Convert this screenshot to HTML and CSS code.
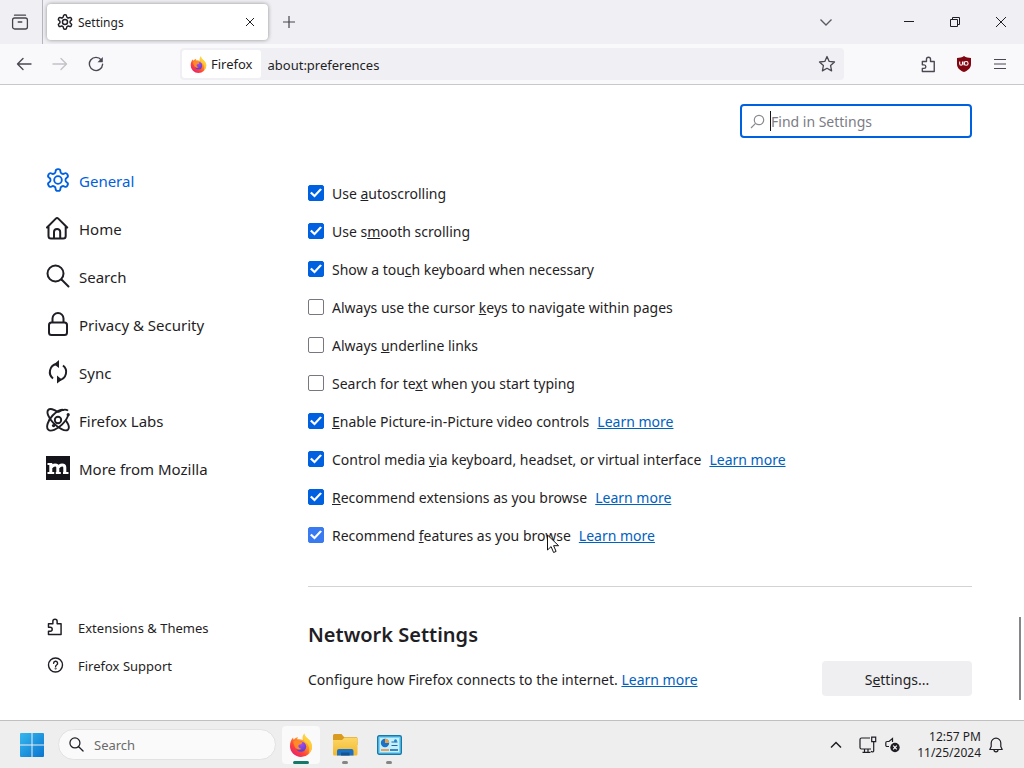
FILE: index.html
```html
<!DOCTYPE html>
<html lang="en">
<head>
<meta charset="utf-8">
<meta name="viewport" content="width=device-width, initial-scale=1">
<title>Settings</title>
<link rel="stylesheet" href="styles.css">
</head>
<body>
<svg class="sprite" aria-hidden="true">
  <defs>
    <linearGradient id="fx-flame" x1="0.85" y1="0.1" x2="0.2" y2="0.95">
      <stop offset="0" stop-color="#ffe14a"/><stop offset="0.35" stop-color="#ff9a26"/><stop offset="0.7" stop-color="#ff4438"/><stop offset="1" stop-color="#e8206c"/>
    </linearGradient>
    <radialGradient id="fx-globe" cx="0.5" cy="0.25" r="0.8">
      <stop offset="0" stop-color="#a44df0"/><stop offset="1" stop-color="#5a3bc8"/>
    </radialGradient>
    <linearGradient id="win-blue" x1="0" y1="0" x2="1" y2="1">
      <stop offset="0" stop-color="#35b8ee"/><stop offset="1" stop-color="#0b74cf"/>
    </linearGradient>
    <linearGradient id="folder-yellow" x1="0" y1="0" x2="0" y2="1">
      <stop offset="0" stop-color="#fcd766"/><stop offset="1" stop-color="#f2b72c"/>
    </linearGradient>
  </defs>
  <symbol id="gear" viewBox="1 1 22 22">
    <path fill="none" stroke="currentColor" d="M12.22 2h-.44a2 2 0 0 0-2 2v.18a2 2 0 0 1-1 1.73l-.43.25a2 2 0 0 1-2 0l-.15-.08a2 2 0 0 0-2.73.73l-.22.38a2 2 0 0 0 .73 2.73l.15.1a2 2 0 0 1 1 1.72v.51a2 2 0 0 1-1 1.74l-.15.09a2 2 0 0 0-.73 2.73l.22.38a2 2 0 0 0 2.73.73l.15-.08a2 2 0 0 1 2 0l.43.25a2 2 0 0 1 1 1.73V20a2 2 0 0 0 2 2h.44a2 2 0 0 0 2-2v-.18a2 2 0 0 1 1-1.73l.43-.25a2 2 0 0 1 2 0l.15.08a2 2 0 0 0 2.73-.73l.22-.39a2 2 0 0 0-.73-2.73l-.15-.08a2 2 0 0 1-1-1.74v-.5a2 2 0 0 1 1-1.74l.15-.09a2 2 0 0 0 .73-2.73l-.22-.38a2 2 0 0 0-2.73-.73l-.15.08a2 2 0 0 1-2 0l-.43-.25a2 2 0 0 1-1-1.73V4a2 2 0 0 0-2-2z"/>
    <circle cx="12" cy="12" r="3.5" fill="none" stroke="currentColor"/>
  </symbol>
  <symbol id="puzzle" viewBox="0 0 16 16">
    <path fill="none" stroke="currentColor" stroke-width="1.3" stroke-linejoin="round" d="M2.2 14.6h11.2V5.2H9.9V3.1a1.9 1.9 0 0 0-3.8 0v2.1H2.2v3.1h1.6a1.7 1.7 0 0 1 0 3.4H2.2z"/>
  </symbol>
  <symbol id="firefox" viewBox="0 0 24 24">
    <path fill="url(#fx-flame)" d="M15.4.4c.2 2.300 1.500 3.500 3 4.800 2.800 2.300 4.600 5 4.600 8.200A11 10.600 0 0 1 1 13.300c0-3.600 1-6.600 3.100-8.700 0 1 .2 1.700.7 2.200C6 5.200 7.200 4.400 9 3.900c-.6.9-.8 1.700-.7 2.400 2.400-.3 4.200-.1 5.700.8-.9-2.600-.3-5 1.400-6.700z"/>
    <path fill="#ffd53d" d="M15.400.4c.2 2.300 1.500 3.500 3 4.800 2.800 2.300 4.600 5 4.600 8.200 0 3-1.400 5.700-3.600 7.500 1.500-3.300 1.200-8.600-2.300-11.100C14.600 8.100 12.800 4.600 15.400.4z" opacity=".75"/>
    <circle cx="12" cy="13.600" r="5.200" fill="url(#fx-globe)"/>
    <path fill="#ff8a2a" d="M4.300 8.500c2.500-1.600 4.500-1.200 6 .1 1.200 0 2.300.1 3.100.8-.5 1.600-2.300 1.900-3.700 2.600-.9 1.500.2 3.600 2.700 3.700-2.900 2.100-7.200.6-8.100-7.200z"/>
  </symbol>
  <symbol id="magnifier" viewBox="0 0 24 24">
    <circle cx="9.500" cy="9.500" r="8" fill="none" stroke="currentColor" stroke-width="2"/>
    <path d="M15.500 15.500l7 7" fill="none" stroke="currentColor" stroke-width="2" stroke-linecap="round"/>
  </symbol>
</svg>

<header class="tabbar">
  <button class="view-btn" aria-label="Firefox View">
    <svg width="18" height="18" viewBox="0 0 18 18" fill="none" stroke="currentColor" stroke-width="1.300" stroke-linecap="round"><path d="M3.500 2.200h11"/><rect x="1.600" y="5" width="14.800" height="11" rx="2"/><path d="M7.200 9h3.600"/></svg>
  </button>
  <div class="tab">
    <svg class="tab-icon" width="16" height="16" stroke-width="2"><use href="#gear"/></svg>
    <span class="tab-title">Settings</span>
    <button class="tab-close" aria-label="Close tab"><svg width="10" height="10" viewBox="0 0 10 10"><path d="M1 1l8 8M9 1l-8 8" stroke="currentColor"/></svg></button>
  </div>
  <button class="new-tab" aria-label="New tab"><svg width="14" height="14" viewBox="0 0 14 14"><path d="M7 1v12M1 7h12" stroke="currentColor" stroke-width="1.200"/></svg></button>
  <button class="all-tabs" aria-label="List all tabs"><svg width="14" height="14" viewBox="0 0 14 14"><path d="M1.500 4.500L7 10l5.500-5.500" fill="none" stroke="currentColor" stroke-width="1.400"/></svg></button>
  <div class="window-controls">
    <button aria-label="Minimize"><svg width="12" height="12" viewBox="0 0 12 12"><path d="M1 5.500h10" stroke="currentColor"/></svg></button>
    <button aria-label="Restore"><svg width="12" height="12" viewBox="0 0 12 12" fill="none" stroke="currentColor"><path d="M1.500 3.500h7v7h-7zM3.500 3.500v-2h7v7h-2"/></svg></button>
    <button aria-label="Close"><svg width="12" height="12" viewBox="0 0 12 12"><path d="M1 1l10 10M11 1L1 11" stroke="currentColor"/></svg></button>
  </div>
</header>

<nav class="toolbar" aria-label="Navigation">
  <button aria-label="Back"><svg width="16" height="16" viewBox="0 0 16 16" fill="none" stroke="currentColor" stroke-width="1.400" stroke-linecap="round" stroke-linejoin="round"><path d="M15 8H1.500M7 2.500L1.500 8 7 13.500"/></svg></button>
  <button class="dim" aria-label="Forward" disabled><svg width="16" height="16" viewBox="0 0 16 16" fill="none" stroke="currentColor" stroke-width="1.400" stroke-linecap="round" stroke-linejoin="round"><path d="M1 8h13.500M9 2.500L14.500 8 9 13.500"/></svg></button>
  <button aria-label="Reload"><svg width="16" height="16" viewBox="0 0 16 16"><path d="M13.300 4A6.600 6.600 0 1 0 14.600 8.300" fill="none" stroke="currentColor" stroke-width="1.400" stroke-linecap="round"/><path d="M14.800 1v5.200H9.500z" fill="currentColor"/></svg></button>
  <span class="spring"></span>
  <div class="urlbar">
    <button class="identity"><svg width="17" height="17"><use href="#firefox"/></svg>Firefox</button>
    <input class="url" type="text" value="about:preferences" aria-label="Address">
    <button class="bookmark" aria-label="Bookmark this page"><svg width="18" height="18" viewBox="0 0 18 18"><path d="M9 1.500l2.200 4.900 5.300.6-3.900 3.600 1 5.300L9 13.300l-4.600 2.600 1-5.300L1.500 7l5.300-.6z" fill="none" stroke="currentColor" stroke-width="1.300" stroke-linejoin="round"/></svg></button>
  </div>
  <span class="spring"></span>
  <button aria-label="Extensions"><svg width="17" height="17"><use href="#puzzle"/></svg></button>
  <button aria-label="uBlock Origin"><svg width="16" height="16" viewBox="0 0 16 16"><path d="M8 0c2 1.400 4.300 1.900 7 2v6c0 4-3 6.500-7 8-4-1.500-7-4-7-8V2c2.700-.1 5-.6 7-2z" fill="#800612"/><path d="M3.700 5.500v2.300a1.400 1.400 0 0 0 2.800 0V5.500M8 5.400v3.800" fill="none" stroke="#fff" stroke-width="1.100"/><circle cx="10.200" cy="7.400" r="1.900" fill="none" stroke="#fff" stroke-width="1.100"/></svg></button>
  <button aria-label="Open application menu"><svg width="14" height="14" viewBox="0 0 14 14"><path d="M1 2.500h12M1 7h12M1 11.500h12" stroke="currentColor" stroke-width="1.200"/></svg></button>
</nav>

<div class="page">
  <aside class="sidebar">
    <nav class="categories" aria-label="Settings categories">
      <a class="current" href="#general"><svg width="24" height="24" stroke-width="1.700"><use href="#gear"/></svg>General</a>
      <a href="#home"><svg width="24" height="24" viewBox="0 0 24 24" fill="none" stroke="currentColor" stroke-width="2" stroke-linejoin="round" stroke-linecap="round"><path d="M1 11.500L9.800 2.600a1.800 1.800 0 0 1 2.500 0L21.200 11.500M2.500 10.300v9.700a2.500 2.500 0 0 0 2.500 2.500h12.200a2.500 2.500 0 0 0 2.500-2.500v-9.700"/><path d="M8 22v-6a3.100 3.100 0 0 1 6.200 0v6"/></svg>Home</a>
      <a href="#search"><svg width="24" height="24"><use href="#magnifier"/></svg>Search</a>
      <a href="#privacy"><svg width="24" height="24" viewBox="0 0 24 24" fill="none" stroke="currentColor" stroke-width="2"><rect x="3" y="10.500" width="18" height="12.500" rx="2.500"/><path d="M6.500 10.500V6.500a5.500 5.500 0 0 1 11 0v4"/></svg>Privacy &amp; Security</a>
      <a href="#sync"><svg width="24" height="24" viewBox="0 0 24 24" fill="none" stroke="currentColor" stroke-width="2"><path d="M10.500 4A8.200 8.200 0 0 0 7 18.500M13.500 20A8.200 8.200 0 0 0 17 5.500"/><path d="M8 4.200l5-4.200v8zM16 19.800l-5-4.200v8z" fill="currentColor" stroke="none"/></svg>Sync</a>
      <a href="#labs"><svg width="24" height="24" viewBox="0 0 24 24" fill="none" stroke="currentColor" stroke-width="1.900"><circle cx="12" cy="12" r="3.200"/><path d="M12 4.300C8 1 3.800.2 2.200 2 .2 4.200 2.500 9.800 7.300 14.800 12.500 20.200 19.300 24 21.900 21.700c1.700-1.600.8-5.200-2-9.200"/><path d="M18.300 2.200C15.300.6 10.600 3.300 6.600 7.500 1.700 12.700-.2 19.300 2.200 21.700c2.400 2.300 8.900-.2 14-5.300 3.300-3.300 5.400-6.600 6-9.500"/><path d="M12 4.300c2.400-1.800 4.800-2.700 6.800-2.700 1.200 0 2.400.3 3.200 1"/><circle cx="22.200" cy="6.700" r="1.600" fill="currentColor" stroke="none"/><circle cx="7.600" cy="17.600" r="1.700" fill="currentColor" stroke="none"/></svg>Firefox Labs</a>
      <a href="#mozilla"><svg width="24" height="24" viewBox="0 0 24 24"><path d="M0 0h24v24H0z" fill="#15141a"/><path d="M4.800 7v10M11.800 17v-5.500c0-3.500-5-3.500-6.500 0M18.800 17v-5.500c0-3.500-5-3.500-6.500 0" fill="none" stroke="#fff" stroke-width="3"/><path d="M1.500 8h4M1.500 17h6.700M9.800 17h5M17 17h5.500" stroke="#fff" stroke-width="2"/></svg>More from Mozilla</a>
    </nav>
    <nav class="side-links" aria-label="Help">
      <a href="#addons"><svg width="18" height="18"><use href="#puzzle"/></svg>Extensions &amp; Themes</a>
      <a href="#support"><svg width="18" height="18" viewBox="0 0 18 18" fill="none" stroke="currentColor" stroke-width="1.400"><circle cx="9.500" cy="9" r="7"/><path d="M7.600 7.300a2 2 0 1 1 3 1.700c-.7.400-1 .8-1 1.500" stroke-linecap="round"/><circle cx="9.600" cy="12.600" r=".3"/></svg>Firefox Support</a>
    </nav>
  </aside>

  <main class="content">
    <div class="find">
      <svg width="15" height="15" viewBox="0 0 15 15" fill="none" stroke="currentColor" stroke-width="1.200"><circle cx="9" cy="6" r="4.700"/><path d="M5.600 9.400L1 14"/></svg>
      <span class="caret"></span>
      <input type="search" placeholder="Find in Settings" aria-label="Find in Settings">
    </div>

    <ul class="options">
      <li><label><input type="checkbox" checked><span>Use <u>a</u>utoscrolling</span></label></li>
      <li><label><input type="checkbox" checked><span>Use s<u>m</u>ooth scrolling</span></label></li>
      <li><label><input type="checkbox" checked><span>Show a tou<u>c</u>h keyboard when necessary</span></label></li>
      <li><label><input type="checkbox"><span>Always use the cursor <u>k</u>eys to navigate within pages</span></label></li>
      <li><label><input type="checkbox"><span>Always <u>u</u>nderline links</span></label></li>
      <li><label><input type="checkbox"><span>Search for te<u>x</u>t when you start typing</span></label></li>
      <li><label><input type="checkbox" checked><span><u>E</u>nable Picture-in-Picture video controls</span></label><a href="#pip">Learn more</a></li>
      <li><label><input type="checkbox" checked><span>Control media <u>v</u>ia keyboard, headset, or virtual interface</span></label><a href="#media">Learn more</a></li>
      <li><label><input type="checkbox" checked><span><u>R</u>ecommend extensions as you browse</span></label><a href="#extensions">Learn more</a></li>
      <li><label class="hovered"><input type="checkbox" checked><span>Recommend <u>f</u>eatures as you browse</span><svg class="pointer" width="14" height="20" viewBox="0 0 14 20"><path d="M1.500 1v15l3.600-3.400 2.500 5.900 2.500-1.100-2.500-5.700h5z" fill="#fff" stroke="#111"/></svg></label><a href="#features">Learn more</a></li>
    </ul>

    <section class="network">
      <h2>Network Settings</h2>
      <div class="network-row">
        <p>Configure how Firefox connects to the internet. <a href="#network">Learn more</a></p>
        <button class="settings-btn">S<u>e</u>ttings...</button>
      </div>
    </section>
  </main>
  <span class="scroll-thumb"></span>
</div>

<footer class="taskbar">
  <button class="start" aria-label="Start"><svg width="24" height="24" viewBox="0 0 24 24" fill="url(#win-blue)"><path d="M0 1a1 1 0 0 1 1-1h10.500v11.500H0zM12.500 0H23a1 1 0 0 1 1 1v10.500H12.500zM0 12.500h11.500V24H1a1 1 0 0 1-1-1zM12.500 12.500H24V23a1 1 0 0 1-1 1H12.500z"/></svg></button>
  <div class="task-search"><svg width="15" height="15"><use href="#magnifier"/></svg><input type="text" placeholder="Search" aria-label="Search Windows"></div>
  <div class="apps">
    <button class="app active" aria-label="Firefox"><svg width="24" height="24"><use href="#firefox"/></svg></button>
    <button class="app" aria-label="File Explorer"><svg width="26" height="24" viewBox="0 0 26 24"><path d="M1 2.500A1.500 1.500 0 0 1 2.500 1h7L12 4h12a1.500 1.500 0 0 1 1.500 1.500V12H1z" fill="#d99a20"/><path d="M1 7h9l2.500-2.500H24A1.500 1.500 0 0 1 25.500 6v15a1.500 1.500 0 0 1-1.500 1.500H2.500A1.500 1.500 0 0 1 1 21z" fill="url(#folder-yellow)"/><path d="M5 22.500V18a2 2 0 0 1 2-2h12.500a2 2 0 0 1 2 2v4.500z" fill="#1b72c4"/><path d="M9 19.500h8.500v3H9z" fill="#125397"/></svg></button>
    <button class="app" aria-label="Control Panel"><svg width="25" height="20" viewBox="0 0 25 20"><rect x=".7" y=".7" width="23.600" height="18.600" rx="1.500" fill="#7bd3f3" stroke="#1679ad" stroke-width="1.400"/><rect x="3" y="3" width="19" height="14" fill="#c4effc"/><circle cx="8" cy="8" r="4.200" fill="#1b73c9"/><path d="M8 8V3.800A4.200 4.200 0 0 1 12.200 8z" fill="#f2a03a"/><path d="M14.500 7h6M14.500 10.500h6" stroke="#1c6cab" stroke-width="1.200"/><circle cx="18.500" cy="5.800" r="1.500" fill="#2784c8"/><path d="M4 15h8" stroke="#f28b34" stroke-width="1.600"/><path d="M13 15h8" stroke="#1c6cab" stroke-width="1.600"/></svg></button>
  </div>
  <div class="tray">
    <button aria-label="Show hidden icons"><svg width="12" height="12" viewBox="0 0 12 12"><path d="M1 8.500l5-5 5 5" fill="none" stroke="currentColor" stroke-width="1.500"/></svg></button>
    <button class="status" aria-label="Network and sound">
      <svg width="18" height="18" viewBox="0 0 18 18" fill="none" stroke="currentColor" stroke-width="1.200"><path d="M11 2H2.500A1.500 1.500 0 0 0 1 3.500v8A1.500 1.500 0 0 0 2.500 13H12M5.500 13v3M9 13v3M3.500 16.300h8"/><path d="M12.700 1.200h4v4.500h-4zM14.700 5.700V15a1.300 1.300 0 0 1-2.500 0"/></svg>
      <svg width="16" height="16" viewBox="0 0 16 16"><path d="M7.500 5V1.500L4 4.500H2A1.200 1.200 0 0 0 .8 5.700v2.600A1.200 1.200 0 0 0 2 9.500h2" fill="none" stroke="currentColor" stroke-width="1.200"/><circle cx="10" cy="10.500" r="4.700" fill="currentColor"/><path d="M8.200 8.700l3.600 3.600M11.800 8.700l-3.600 3.600" stroke="#fff" stroke-width="1.200"/></svg>
    </button>
    <button class="clock"><span>12:57 PM</span><span>11/25/2024</span></button>
    <button aria-label="Notifications"><svg width="16" height="16" viewBox="0 0 16 16" fill="none" stroke="currentColor" stroke-width="1.200" stroke-linejoin="round"><path d="M8 1.200A4.800 4.800 0 0 0 3.200 6v3.500L1.800 12.500h12.400l-1.400-3V6A4.800 4.800 0 0 0 8 1.200zM6 12.800a2 2 0 0 0 4 0"/></svg></button>
  </div>
</footer>
</body>
</html>
```

FILE: styles.css
```css
* { box-sizing: border-box; }

body {
  margin: 0;
  min-height: 100vh;
  display: flex;
  flex-direction: column;
  background: #fff;
  color: #1f1e25;
  font-family: "Noto Sans", "Open Sans", sans-serif;
  font-size: 14px;
  line-height: 20px;
}

button, input { font: inherit; color: inherit; }

button {
  display: flex;
  align-items: center;
  justify-content: center;
  padding: 0;
  border: 0;
  background: none;
}

input { min-width: 0; border: 0; padding: 0; background: none; outline: none; }
svg { flex: none; }
.sprite { position: absolute; width: 0; height: 0; }
a { color: #0061c0; }

/* Tab strip */
.tabbar { display: flex; align-items: stretch; height: 44px; background: #f0f0f4; }
.view-btn { width: 43px; padding-right: 3px; border-right: 1px solid #b5b5bb; color: #45444c; }

.tab {
  display: flex;
  align-items: center;
  gap: 5px;
  flex: 0 1 221px;
  margin: 4px 0 4px 4px;
  padding: 0 8px 0 10px;
  border-radius: 4px;
  background: #fff;
  box-shadow: 0 0 4px rgba(0, 0, 0, 0.4);
  font-size: 12px;
}
.tab-title { flex: 1; padding-top: 2px; }
.tab-close { width: 20px; height: 20px; }
.new-tab { width: 42px; color: #45444c; }
.all-tabs { width: 36px; margin-left: auto; color: #5b5b66; }
.window-controls { display: flex; margin-left: 42px; }
.window-controls button { width: 46px; }

/* Navigation toolbar */
.toolbar {
  display: flex;
  align-items: center;
  height: 41px;
  padding: 0 6px;
  background: #f9f9fb;
  border-bottom: 1px solid #c8c8cc;
}
.toolbar > button { width: 36px; height: 36px; color: #4a4953; }
.toolbar > .dim { color: #c2c2c8; }
.spring { flex: 1; }
.urlbar {
  display: flex;
  align-items: center;
  flex: 10;
  height: 32px;
  padding: 2px;
  border-radius: 4px;
  background: #f0f0f4;
  font-size: 13px;
}
.identity { height: 28px; gap: 4px; padding: 0 8px; border-radius: 3px; background: #fff; }
.url { flex: 1; padding: 2px 0 0 7px; }
.bookmark { width: 30px; color: #4a4953; }

/* Settings page */
.page { position: relative; flex: 1; display: flex; }

.sidebar {
  display: flex;
  flex-direction: column;
  justify-content: space-between;
  flex: 0 0 308px;
  padding: 72px 0 35px 46px;
}
.categories { display: flex; flex-direction: column; font-size: 15px; }
.sidebar a { display: flex; align-items: center; color: inherit; text-decoration: none; }
.sidebar svg { margin-bottom: 2px; }
.categories a { height: 48px; gap: 9px; }
.sidebar .current { color: #0061e0; }
.side-links { font-size: 13px; }
.side-links a { height: 38px; gap: 14px; }

.content {
  flex: 0 1 664px;
  display: flex;
  flex-direction: column;
  padding: 19px 0 24px;
}

.find {
  display: flex;
  align-items: center;
  align-self: flex-end;
  width: 232px;
  height: 34px;
  padding: 0 8px;
  border: 2px solid #0061e0;
  border-radius: 4px;
  color: #8a8a92;
}
.find input { flex: 1; appearance: none; padding-top: 2px; }
.find input::placeholder { color: #7c7c84; opacity: 1; }
.caret { width: 1px; height: 20px; margin-left: 5px; background: #15141a; }

.options { list-style: none; margin: 36px 0 0; padding: 0; }
.options li { display: flex; align-items: center; gap: 8px; min-height: 38px; }
.options label { position: relative; display: flex; align-items: center; gap: 8px; }
.options span, .options a { padding-top: 2px; }

.options input {
  appearance: none;
  display: grid;
  place-items: center;
  flex: none;
  width: 16px;
  height: 16px;
  margin: 0;
  border: 1px solid #77777f;
  border-radius: 2px;
}
.options input:checked { border-color: #0061e0; background: #0061e0; }
.options input:checked::before {
  content: "";
  width: 12px;
  height: 10px;
  background: #fff;
  clip-path: polygon(0 52%, 14% 38%, 37% 64%, 84% 4%, 100% 16%, 38% 96%);
}
.options .hovered input { border-color: #3a7af0; background: #3a7af0; }

.pointer { position: absolute; right: 11px; top: 10px; }

.network { margin-top: 32px; border-top: 1px solid #d3d3d7; padding-top: 34px; }
.network h2 { margin: 0; font-size: 20px; font-weight: 600; line-height: 28px; }
.network-row { display: flex; align-items: center; justify-content: space-between; margin-top: 12px; }
.network p { margin: 0; padding-top: 2px; }
.settings-btn { width: 150px; height: 35px; display: block; padding-top: 2px; border-radius: 4px; background: #efeff1; }

.scroll-thumb {
  position: absolute;
  right: 3px;
  bottom: 20px;
  width: 2px;
  height: 83px;
  background: #85858a;
}

/* Taskbar */
.taskbar {
  display: flex;
  align-items: center;
  height: 48px;
  padding: 0 20px;
  border-top: 1px solid #c0c0c0;
  background: #eeeeee;
}
.start { width: 24px; height: 24px; }
.task-search {
  display: flex;
  align-items: center;
  gap: 10px;
  flex: 0 1 218px;
  min-width: 0;
  height: 31px;
  margin-left: 14px;
  padding: 0 10px;
  border: 1px solid #e2e2e2;
  border-radius: 16px;
  background: #fafafa;
  font-size: 13px;
}
.task-search input { flex: 1; width: 0; }
.task-search input::placeholder { color: #6a6a6a; opacity: 1; }
.apps { display: flex; gap: 6px; margin-left: 6px; }
.app { position: relative; width: 38px; height: 38px; border-radius: 4px; }
.app::after {
  content: "";
  position: absolute;
  left: 16px;
  right: 16px;
  bottom: 0;
  height: 3px;
  border-radius: 2px;
  background: #858585;
}
.active { background: #fafafa; }
.active::after { left: 11px; right: 11px; background: #14786a; }

.tray { display: flex; align-items: center; margin-left: auto; }
.status { gap: 8px; margin-left: 17px; }
.clock { flex-direction: column; align-items: flex-end; margin: 0 7px 0 16px; font-size: 12px; line-height: 16px; }
```
